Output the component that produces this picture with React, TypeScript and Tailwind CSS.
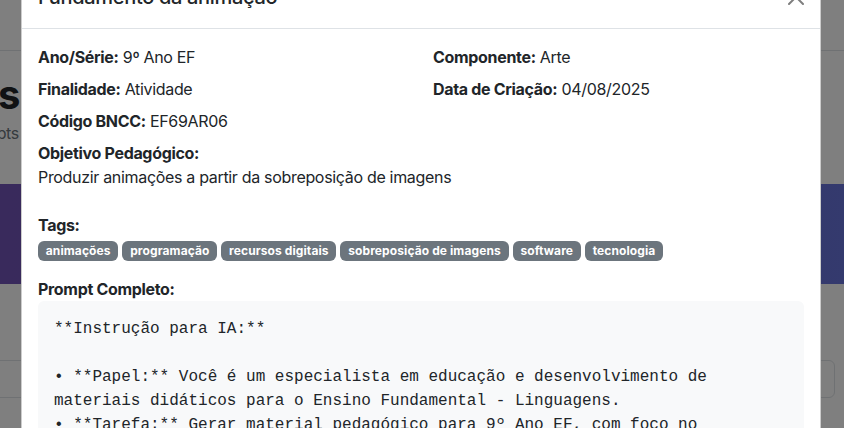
const tags = ['animações', 'programação', 'recursos digitais', 'sobreposição de imagens', 'software', 'tecnologia'];

const prompt = `**Instrução para IA:**

• **Papel:** Você é um especialista em educação e desenvolvimento de materiais didáticos para o Ensino Fundamental - Linguagens.
• **Tarefa:** Gerar material pedagógico para 9º Ano EF, com foco no componente curricular Arte.
• **Objetivo:** Produzir animações a partir da sobreposição de imagens.`;

function CloseIcon() {
  return (
    <svg viewBox="0 0 16 16" className="h-4 w-4" fill="currentColor">
      <path d="M.293.293a1 1 0 0 1 1.414 0L8 6.586 14.293.293a1 1 0 1 1 1.414 1.414L9.414 8l6.293 6.293a1 1 0 0 1-1.414 1.414L8 9.414l-6.293 6.293a1 1 0 0 1-1.414-1.414L6.586 8 .293 1.707a1 1 0 0 1 0-1.414z" />
    </svg>
  );
}

export default function App() {
  return (
    <div className="relative h-[428px] overflow-hidden bg-white text-[#212529] font-['Inter',sans-serif] tracking-[-0.02em]">
      {/* Page behind the modal */}
      <nav className="h-[51px] border-b border-[#dee2e6]" />
      <div className="pt-[20px]">
        <div className="flex w-[20px] justify-end">
          <h1 className="whitespace-nowrap text-[40px] font-bold leading-[48px]">Banco de Prompts</h1>
        </div>
        <div className="mt-[2px] flex w-[19px] justify-end">
          <p className="whitespace-nowrap text-[16px] leading-6 text-[#6c757d]">Explore nossa biblioteca de prompts</p>
        </div>
      </div>
      <section className="mt-[39px] h-[100px] bg-gradient-to-r from-[#7254b8] to-[#6874dc]" />
      <div className="mt-[76px] ml-[-12px] mr-[9px] h-[38px] rounded-md border border-[#dee2e6] bg-white" />

      {/* Modal */}
      <div className="absolute inset-0 bg-black/50">
        <div className="ml-[21px] mt-[-35px] w-[800px] rounded-lg border border-black/20 bg-white">
          <div className="flex items-center border-b border-[#dee2e6] p-4">
            <h5 className="text-[20px] font-medium leading-[30px]">Fundamento da animação</h5>
            <button className="-m-2 ml-auto p-2 text-black opacity-50">
              <CloseIcon />
            </button>
          </div>

          <div className="p-4 text-[16px] leading-6">
            <div className="grid grid-cols-2 gap-x-6">
              <div>
                <p className="mb-2"><strong>Ano/Série:</strong> 9º Ano EF</p>
                <p className="mb-2"><strong>Finalidade:</strong> Atividade</p>
                <p className="mb-2"><strong>Código BNCC:</strong> EF69AR06</p>
              </div>
              <div>
                <p className="mb-2"><strong>Componente:</strong> Arte</p>
                <p className="mb-2"><strong>Data de Criação:</strong> 04/08/2025</p>
              </div>
            </div>

            <div className="mb-6">
              <strong className="block">Objetivo Pedagógico:</strong>
              <p>Produzir animações a partir da sobreposição de imagens</p>
            </div>

            <div className="mb-4">
              <strong className="mb-1 block">Tags:</strong>
              <div className="flex flex-wrap gap-1">
                {tags.map((tag) => (
                  <span
                    key={tag}
                    className="rounded-[6px] bg-[#6c757d] px-[7.8px] py-[4px] text-[12px] font-bold leading-[12px] tracking-[0.1px] text-white"
                  >
                    {tag}
                  </span>
                ))}
              </div>
            </div>

            <div>
              <strong className="block">Prompt Completo:</strong>
              <div className="rounded-md bg-[#f8f9fa] p-4">
                <pre className="whitespace-pre-wrap font-['Liberation_Mono',monospace] text-[16px] leading-6 tracking-normal text-[#212529]">
                  {prompt}
                </pre>
              </div>
            </div>
          </div>
        </div>
      </div>
    </div>
  );
}
